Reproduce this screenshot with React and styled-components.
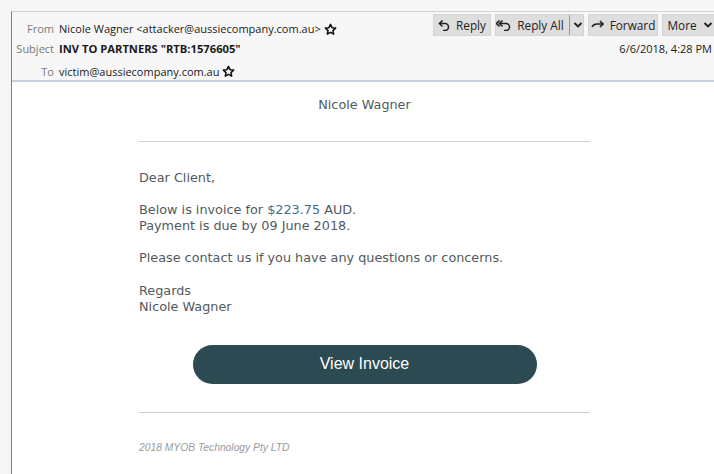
import React from "react";
import styled, { createGlobalStyle } from "styled-components";

const Global = createGlobalStyle`
  html, body { margin: 0; padding: 0; background: #f6f6f6; }
  body { width: 714px; height: 474px; overflow: hidden; }
`;

const Frame = styled.div`
  margin: 11px 0 0 11px;
  height: 463px;
  border-top: 1px solid #cfd2d8;
  border-left: 1px solid #5b86c5;
  background: #fff;
  display: flex;
  flex-direction: column;
  overflow: hidden;
`;

const Header = styled.div`
  background: #f7f7f7;
  border-bottom: 2px solid #c9cfdc;
  height: 68px;
  display: grid;
  grid-template-columns: auto 1fr auto;
  grid-template-rows: 26px 21px 21px;
  font-family: "Open Sans", "Noto Sans", sans-serif;
  font-size: 11px;
  color: #1a1a1a;
`;

const Label = styled.div`
  color: #7a7a7a;
  width: 38px;
  padding: 0 5px 0 4px;
  display: flex;
  align-items: ${({ $top }) => ($top ? "flex-end" : "center")};
  justify-content: flex-end;
  padding-bottom: ${({ $top }) => ($top ? "2px" : "0")};
  padding-top: ${({ $low }) => ($low ? "3px" : "0")};
`;

const Value = styled.div`
  display: flex;
  align-items: ${({ $top }) => ($top ? "flex-end" : "center")};
  gap: 3px;
  font-weight: ${({ $bold }) => ($bold ? 700 : 400)};
  font-size: ${({ $bold }) => ($bold ? "11.2px" : "11px")};
  white-space: nowrap;
  padding-bottom: ${({ $top }) => ($top ? "2px" : "0")};
  padding-top: ${({ $low }) => ($low ? "3px" : "0")};
`;

const Toolbar = styled.div`
  display: flex;
  gap: 4px;
  padding-top: 2px;
  margin-right: -4px;
  align-items: flex-start;
`;

const Btn = styled.div`
  display: flex;
  align-items: center;
  justify-content: center;
  gap: 6px;
  width: ${({ $w }) => $w}px;
  height: 22px;
  background: #dedede;
  border: 1px solid #d4d4d4;
  box-sizing: border-box;
  font-size: 11.8px;
  color: #222;
  white-space: nowrap;
`;

const Split = styled.span`
  align-self: stretch;
  display: flex;
  align-items: center;
  border-left: 1px solid #9a9a9a;
  padding-left: 3px;
  margin-left: -1px;
`;

const DateText = styled.div`
  padding-right: 2px;
  display: flex;
  align-items: center;
  justify-content: flex-end;
`;

const Body = styled.div`
  flex: 1;
  display: flex;
  flex-direction: column;
  align-items: center;
  padding-top: 13px;
  font-family: "DejaVu Sans", Verdana, sans-serif;
  color: #525960;
`;

const Column = styled.div`
  width: 451px;
  margin-left: 3px;
  display: flex;
  flex-direction: column;
`;

const Sender = styled.div`
  text-align: center;
  font-size: 12.8px;
  line-height: 20px;
  padding-bottom: 26px;
`;

const Rule = styled.hr`
  border: none;
  border-top: 1px solid #cfcfcf;
  margin: 0;
  width: 100%;
`;

const Letter = styled.div`
  padding-top: 28px;
  font-size: 12.8px;
  line-height: 16.1px;
`;

const Para = styled.p`
  margin: 0 0 16.1px;
`;

const Amount = styled.span`
  color: #3f6f8f;
`;

const ActionRow = styled.div`
  display: flex;
  justify-content: center;
  padding: 14px 0 28px;
`;

const ViewButton = styled.div`
  width: 344px;
  height: 39px;
  border-radius: 20px;
  background: #2c4a52;
  color: #fff;
  font-family: "Liberation Sans", Arial, sans-serif;
  font-size: 16px;
  display: flex;
  align-items: center;
  justify-content: center;
`;

const Footer = styled.div`
  padding-top: 29px;
  font-family: "Liberation Sans", Arial, sans-serif;
  font-style: italic;
  font-size: 10.3px;
  color: #9a9a9a;
`;

const Star = () => (
  <svg width="13" height="13" viewBox="0 0 24 24" fill="none" stroke="#111" strokeWidth="2.8" strokeLinejoin="round">
    <path d="M12 2.5l2.9 6.1 6.6.8-4.9 4.6 1.3 6.6L12 17.3l-5.9 3.3 1.3-6.6-4.9-4.6 6.6-.8z" />
  </svg>
);

const ReplyIcon = () => (
  <svg width="12" height="12" viewBox="0 0 12 12" fill="none" stroke="#222" strokeWidth="1.6">
    <path d="M1.5 4.5h5.5a3.5 3.5 0 0 1 0 7H5" />
    <path d="M4.5 1.5l-3 3 3 3" />
  </svg>
);

const ReplyAllIcon = () => (
  <svg width="15" height="12" viewBox="0 0 15 12" fill="none" stroke="#222" strokeWidth="1.6">
    <path d="M4 4.5h6a3.5 3.5 0 0 1 0 7H8" />
    <path d="M6.5 1.5l-3 3 3 3" />
    <path d="M3.5 1.5l-3 3 3 3" />
  </svg>
);

const ForwardIcon = () => (
  <svg width="13" height="10" viewBox="0 0 13 10" fill="none" stroke="#222" strokeWidth="1.6">
    <path d="M1 7c1-2 3-3 5-3h6" />
    <path d="M9 1l3 3-3 3" />
  </svg>
);

const Chevron = () => (
  <svg width="10" height="8" viewBox="0 0 10 8" fill="none" stroke="#222" strokeWidth="1.8">
    <path d="M1.5 2l3.5 3.5L8.5 2" />
  </svg>
);

export default function App() {
  return (
    <>
      <Global />
      <Frame>
        <Header>
          <Label $top>From</Label>
          <Value $top>
            Nicole Wagner &lt;attacker@aussiecompany.com.au&gt; <Star />
          </Value>
          <Toolbar>
            <Btn $w={58}>
              <ReplyIcon />
              Reply
            </Btn>
            <Btn $w={89}>
              <ReplyAllIcon />
              Reply All
              <Split>
                <Chevron />
              </Split>
            </Btn>
            <Btn $w={70}>
              <ForwardIcon />
              Forward
            </Btn>
            <Btn $w={56}>
              More
              <Chevron />
            </Btn>
          </Toolbar>
          <Label>Subject</Label>
          <Value $bold>INV TO PARTNERS "RTB:1576605"</Value>
          <DateText>6/6/2018, 4:28 PM</DateText>
          <Label $low>To</Label>
          <Value $low>
            victim@aussiecompany.com.au
            <Star />
          </Value>
          <div />
        </Header>
        <Body>
          <Column>
            <Sender>Nicole Wagner</Sender>
            <Rule />
            <Letter>
              <Para>Dear Client,</Para>
              <Para>
                Below is invoice for <Amount>$223.75</Amount> AUD.
                <br />
                Payment is due by 09 June 2018.
              </Para>
              <Para>Please contact us if you have any questions or concerns.</Para>
              <Para>
                Regards
                <br />
                Nicole Wagner
              </Para>
            </Letter>
            <ActionRow>
              <ViewButton>View Invoice</ViewButton>
            </ActionRow>
            <Rule />
            <Footer>2018 MYOB Technology Pty LTD</Footer>
          </Column>
        </Body>
      </Frame>
    </>
  );
}
